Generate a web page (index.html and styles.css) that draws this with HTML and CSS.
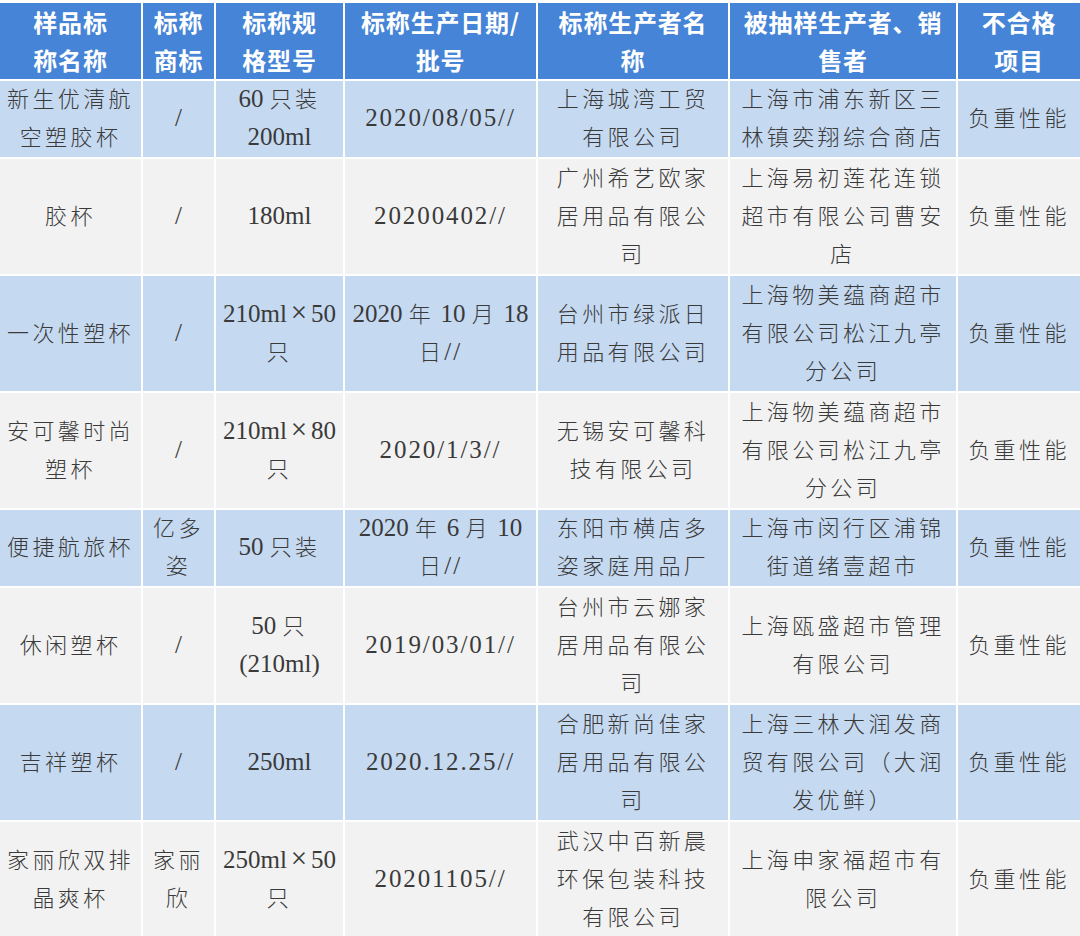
FILE: index.html
```html
<!DOCTYPE html>
<html lang="zh-CN">
<head>
<meta charset="utf-8">
<title>不合格样品</title>
<link rel="stylesheet" href="styles.css">
</head>
<body>
<table class="sheet">
  <colgroup>
    <col class="c1"><col class="c2"><col class="c3"><col class="c4"><col class="c5"><col class="c6"><col class="c7">
  </colgroup>
  <thead>
    <tr>
      <th>样品标<br>称名称</th>
      <th>标称<br>商标</th>
      <th>标称规<br>格型号</th>
      <th>标称生产日期/<br>批号</th>
      <th>标称生产者名<br>称</th>
      <th>被抽样生产者、销<br>售者</th>
      <th>不合格<br>项目</th>
    </tr>
  </thead>
  <tbody>
    <tr>
      <td>新生优清航空塑胶杯</td>
      <td><span class="n">/</span></td>
      <td><span class="n">60 </span>只装<span class="n"> 200ml</span></td>
      <td><span class="n d">2020/08/05//</span></td>
      <td>上海城湾工贸有限公司</td>
      <td>上海市浦东新区三林镇奕翔综合商店</td>
      <td>负重性能</td>
    </tr>
    <tr class="tall">
      <td>胶杯</td>
      <td><span class="n">/</span></td>
      <td><span class="n">180ml</span></td>
      <td><span class="n d">20200402//</span></td>
      <td>广州希艺欧家居用品有限公司</td>
      <td>上海易初莲花连锁超市有限公司曹安店</td>
      <td>负重性能</td>
    </tr>
    <tr class="tall">
      <td>一次性塑杯</td>
      <td><span class="n">/</span></td>
      <td><span class="n">210ml</span><span class="x">×</span><span class="n">50</span>只</td>
      <td><span class="n">2020 </span>年<span class="n"> 10 </span>月<span class="n"> 18 </span>日<span class="n d">//</span></td>
      <td>台州市绿派日用品有限公司</td>
      <td>上海物美蕴商超市有限公司松江九亭分公司</td>
      <td>负重性能</td>
    </tr>
    <tr class="tall">
      <td>安可馨时尚塑杯</td>
      <td><span class="n">/</span></td>
      <td><span class="n">210ml</span><span class="x">×</span><span class="n">80</span>只</td>
      <td><span class="n d">2020/1/3//</span></td>
      <td>无锡安可馨科技有限公司</td>
      <td>上海物美蕴商超市有限公司松江九亭分公司</td>
      <td>负重性能</td>
    </tr>
    <tr>
      <td>便捷航旅杯</td>
      <td>亿多姿</td>
      <td><span class="n">50 </span>只装</td>
      <td><span class="n">2020 </span>年<span class="n"> 6 </span>月<span class="n"> 10 </span>日<span class="n d">//</span></td>
      <td>东阳市横店多姿家庭用品厂</td>
      <td>上海市闵行区浦锦街道绪壹超市</td>
      <td>负重性能</td>
    </tr>
    <tr class="tall">
      <td>休闲塑杯</td>
      <td><span class="n">/</span></td>
      <td><span class="n">50 </span>只<span class="n"> (210ml)</span></td>
      <td><span class="n d">2019/03/01//</span></td>
      <td>台州市云娜家居用品有限公司</td>
      <td>上海瓯盛超市管理有限公司</td>
      <td>负重性能</td>
    </tr>
    <tr class="tall">
      <td>吉祥塑杯</td>
      <td><span class="n">/</span></td>
      <td><span class="n">250ml</span></td>
      <td><span class="n d">2020.12.25//</span></td>
      <td>合肥新尚佳家居用品有限公司</td>
      <td>上海三林大润发商贸有限公司（大润发优鲜）</td>
      <td>负重性能</td>
    </tr>
    <tr class="tall">
      <td>家丽欣双排晶爽杯</td>
      <td>家丽欣</td>
      <td><span class="n">250ml</span><span class="x">×</span><span class="n">50</span>只</td>
      <td><span class="n d">20201105//</span></td>
      <td>武汉中百新晨环保包装科技有限公司</td>
      <td>上海申家福超市有限公司</td>
      <td>负重性能</td>
    </tr>
  </tbody>
</table>
</body>
</html>
```

FILE: styles.css
```css
html, body {
  margin: 0;
  padding: 0;
  background: #ffffff;
  overflow: hidden;
}

.sheet {
  table-layout: fixed;
  border-collapse: separate;
  border-spacing: 2px;
  width: 1084px;
  margin: 1px -2px 0 -2px;
}

.c1 { width: 141px; }
.c2 { width: 71px; }
.c3 { width: 127px; }
.c4 { width: 191px; }
.c5 { width: 190px; }
.c6 { width: 226px; }
.c7 { width: 122px; }

.sheet th {
  background: #4584d6;
  color: #ffffff;
  font-family: "Noto Sans CJK SC", sans-serif;
  font-weight: 700;
  font-size: 24px;
  letter-spacing: 0.8px;
  line-height: 38px;
  height: 76px;
  padding: 0;
  text-align: center;
  vertical-align: middle;
}

.sheet td {
  font-family: "Liberation Serif", "Noto Sans CJK SC", serif;
  font-weight: 300;
  font-size: 22px;
  letter-spacing: 3.4px;
  line-height: 38px;
  color: #3a3a3a;
  text-align: center;
  vertical-align: middle;
  padding: 0 4px;
  height: 76px;
}

.sheet .tall td {
  height: 115px;
}

.sheet tbody tr:nth-child(odd) td { background: #c5d9f1; }
.sheet tbody tr:nth-child(even) td { background: #f2f2f2; }

.sheet td:nth-child(3) { padding: 0 2px; }
.sheet td:nth-child(4) { padding: 0 2px; }
.sheet td:nth-child(5) { padding: 0 8px; }
.sheet td:nth-child(6) { padding: 0 6px; }

.n {
  font-family: "Liberation Serif", serif;
  font-weight: 400;
  font-size: 25px;
  line-height: 20px;
  letter-spacing: 0;
}

.n.d {
  letter-spacing: 1.9px;
}

.x {
  display: inline-block;
  width: 24px;
  text-align: center;
  font-family: "Liberation Serif", serif;
  font-size: 29px;
  line-height: 20px;
  letter-spacing: 0;
}
```
